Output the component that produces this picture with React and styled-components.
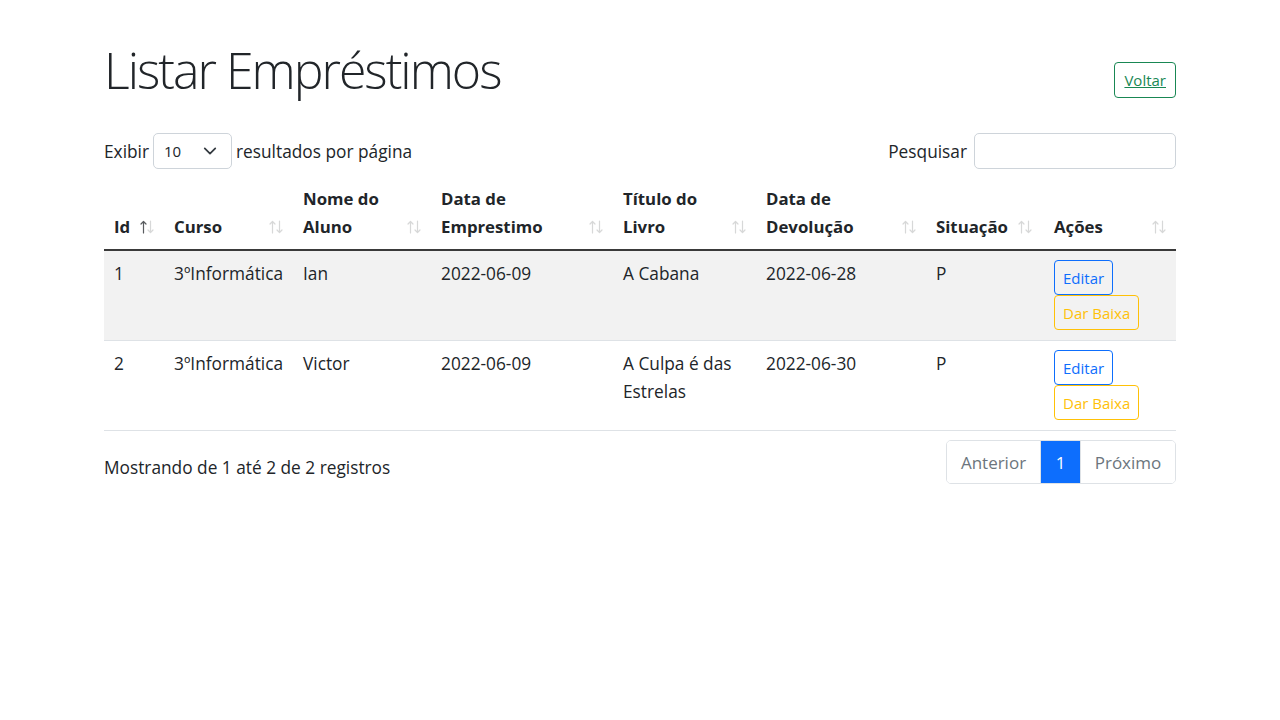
import React from 'react';
import styled, {createGlobalStyle} from 'styled-components';

const GlobalStyle = createGlobalStyle`
  html, body {
    margin: 0;
    padding: 0;
    background: #fff;
  }
  body {
    font-family: "Open Sans", "Noto Sans", sans-serif;
    font-size: 17.3px;
    color: #212529;
  }
  * { box-sizing: border-box; }
`

const Page = styled.div`
  width: 1072px;
  margin: 0 auto;
  padding-top: 39px;
`

const TitleBar = styled.div`
  display: flex;
  justify-content: space-between;
  align-items: flex-start;
`

const Title = styled.h1`
  margin: 0;
  font-size: 50px;
  line-height: 62px;
  font-weight: 300;
  letter-spacing: -2px;
`

const OutlineButton = styled.a`
  display: inline-flex;
  align-items: center;
  justify-content: center;
  height: ${p => p.$h || 35}px;
  padding: 0 ${p => p.$px || 9}px;
  border: 1px solid ${p => p.$color};
  border-radius: 4px;
  color: ${p => p.$color};
  font-size: ${p => p.$fs || 15}px;
  text-decoration: ${p => (p.$underline ? 'underline' : 'none')};
  background: transparent;
  cursor: pointer;
  margin-top: ${p => p.$mt || 0}px;
`

const Controls = styled.div`
  display: flex;
  justify-content: space-between;
  align-items: center;
  margin-top: 32px;
  height: 36px;
`

const ControlGroup = styled.label`
  display: flex;
  align-items: center;
  gap: ${p => p.$gap || 6}px;
`

const FakeSelect = styled.div`
  width: 79px;
  height: 36px;
  border: 1px solid #ced4da;
  border-radius: 5px;
  display: flex;
  align-items: center;
  justify-content: space-between;
  padding: 0 14px 0 10px;
  font-size: 15px;
`

const SearchInput = styled.input`
  width: 202px;
  height: 36px;
  border: 1px solid #ced4da;
  border-radius: 5px;
  outline: none;
  padding: 0 10px;
  font: inherit;
`

const Table = styled.table`
  width: 100%;
  margin-top: 8px;
  border-collapse: collapse;
  table-layout: fixed;
`

const Th = styled.th`
  text-align: left;
  vertical-align: bottom;
  padding: 8px 10px 8px 10px;
  font-size: 16.8px;
  font-weight: 700;
  line-height: 28px;
  border-bottom: 2px solid #3a3a3a;
`

const ThInner = styled.div`
  display: flex;
  justify-content: ${p => (p.$tight ? 'flex-start' : 'space-between')};
  gap: 10px;
  align-items: flex-end;
`

const ArrowIcon = styled.svg`
  flex: none;
  margin-bottom: 7px;
`

const Row = styled.tr`
  background: ${p => (p.$striped ? '#f2f2f2' : '#fff')};
  border-bottom: 1px solid #dee2e6;
`

const Td = styled.td`
  vertical-align: top;
  padding: 9px 10px 10px 10px;
  line-height: 28px;
`

const Actions = styled.div`
  display: flex;
  flex-direction: column;
  align-items: flex-start;
`

const Footer = styled.div`
  display: flex;
  justify-content: space-between;
  align-items: center;
  margin-top: 9px;
`

const Info = styled.div`
  padding-top: 10px;
`

const Pagination = styled.div`
  display: flex;
  border: 1px solid #dee2e6;
  border-radius: 5px;
  overflow: hidden;
  height: 44px;
`

const PageItem = styled.div`
  display: flex;
  align-items: center;
  justify-content: center;
  width: ${p => p.$w}px;
  font-size: 17px;
  color: ${p => (p.$active ? '#fff' : '#6c757d')};
  background: ${p => (p.$active ? '#0d6efd' : '#fff')};
  & + & { border-left: 1px solid #dee2e6; }
`

const columns = [
    {label: ['Id'], width: 60, tight: true, active: true},
    {label: ['Curso'], width: 129},
    {label: ['Nome do', 'Aluno'], width: 138},
    {label: ['Data de', 'Emprestimo'], width: 182},
    {label: ['Título do', 'Livro'], width: 143},
    {label: ['Data de', 'Devolução'], width: 170},
    {label: ['Situação'], width: 118, tight: true},
    {label: ['Ações'], width: 132},
]

const rows = [
    {id: 1, curso: '3ºInformática', aluno: 'Ian', emp: '2022-06-09', livro: 'A Cabana', dev: '2022-06-28', sit: 'P'},
    {id: 2, curso: '3ºInformática', aluno: 'Victor', emp: '2022-06-09', livro: 'A Culpa é das Estrelas', dev: '2022-06-30', sit: 'P'},
]

const Chevron = () => (
    <svg width="14" height="14" viewBox="0 0 16 16" fill="none" stroke="#343a40" strokeWidth="2" strokeLinecap="round" strokeLinejoin="round">
        <path d="M2 5l6 6 6-6"/>
    </svg>
)

const SortArrows = ({active}) => (
    <ArrowIcon width="14" height="14" viewBox="0 0 14 14" fill="none" strokeWidth="1.2" strokeLinecap="round" strokeLinejoin="round">
        <g stroke="#212529" opacity={active ? 0.75 : 0.18}>
            <path d="M3.5 13V1.5M1 4l2.5-2.5L6 4"/>
        </g>
        <g stroke="#212529" opacity="0.18">
            <path d="M10.5 1v11.5M8 10l2.5 2.5L13 10"/>
        </g>
    </ArrowIcon>
)

const App = () => {
    return <>
        <GlobalStyle/>
        <Page>
            <TitleBar>
                <Title>Listar Empréstimos</Title>
                <OutlineButton $color="#198754" $underline $mt={23} $h={36} $px={9} $fs={15}>Voltar</OutlineButton>
            </TitleBar>

            <Controls>
                <ControlGroup $gap={4}>
                    Exibir
                    <FakeSelect>10 <Chevron/></FakeSelect>
                    resultados por página
                </ControlGroup>
                <ControlGroup $gap={7}>
                    Pesquisar
                    <SearchInput type="text"/>
                </ControlGroup>
            </Controls>

            <Table>
                <colgroup>
                    {columns.map((c, i) => <col key={i} style={{width: c.width}}/>)}
                </colgroup>
                <thead>
                <tr>
                    {columns.map((c, i) => (
                        <Th key={i}>
                            <ThInner $tight={c.tight}>
                                <span>{c.label.map((l, j) => <div key={j}>{l}</div>)}</span>
                                <SortArrows active={c.active}/>
                            </ThInner>
                        </Th>
                    ))}
                </tr>
                </thead>
                <tbody>
                {rows.map((r, i) => (
                    <Row key={r.id} $striped={i % 2 === 0}>
                        <Td>{r.id}</Td>
                        <Td>{r.curso}</Td>
                        <Td>{r.aluno}</Td>
                        <Td>{r.emp}</Td>
                        <Td>{r.livro}</Td>
                        <Td>{r.dev}</Td>
                        <Td>{r.sit}</Td>
                        <Td>
                            <Actions>
                                <OutlineButton $color="#0d6efd" $px={8}>Editar</OutlineButton>
                                <OutlineButton $color="#ffc107" $px={8}>Dar Baixa</OutlineButton>
                            </Actions>
                        </Td>
                    </Row>
                ))}
                </tbody>
            </Table>

            <Footer>
                <Info>Mostrando de 1 até 2 de 2 registros</Info>
                <Pagination>
                    <PageItem $w={93}>Anterior</PageItem>
                    <PageItem $w={40} $active>1</PageItem>
                    <PageItem $w={95}>Próximo</PageItem>
                </Pagination>
            </Footer>
        </Page>
    </>
}

export default App;
